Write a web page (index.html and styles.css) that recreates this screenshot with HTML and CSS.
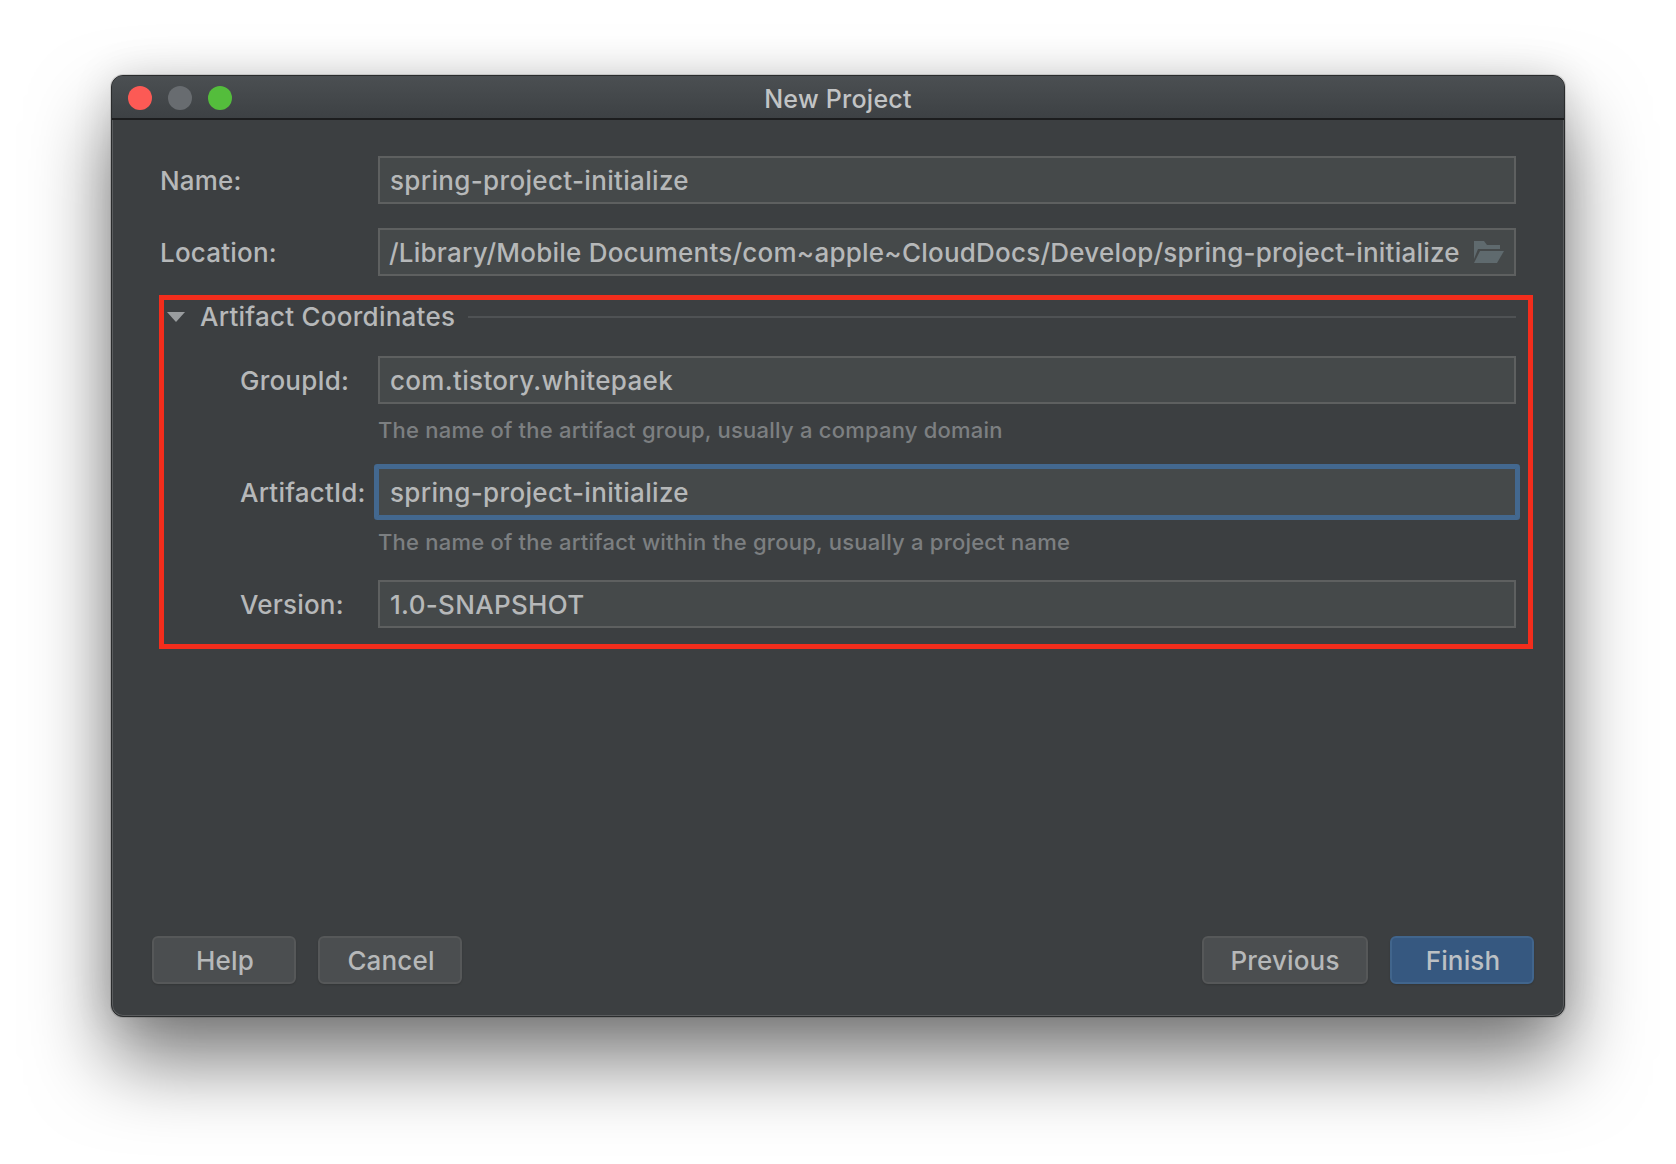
FILE: index.html
```html
<!DOCTYPE html>
<html lang="en">
<head>
<meta charset="utf-8">
<title>New Project</title>
<link rel="stylesheet" href="styles.css">
</head>
<body>
<div class="window">
  <header class="titlebar">
    <div class="lights">
      <span class="light light-red"></span>
      <span class="light light-gray"></span>
      <span class="light light-green"></span>
    </div>
    <div class="title">New Project</div>
  </header>
  <main class="content">
    <div class="row top-row">
      <label class="label">Name:</label>
      <div class="field">spring-project-initialize</div>
    </div>
    <div class="row top-row">
      <label class="label">Location:</label>
      <div class="field field-path">
        <span class="path-text">/Library/Mobile Documents/com~apple~CloudDocs/Develop/spring-project-initialize</span>
        <svg class="folder" width="30" height="22" viewBox="0 0 30 22"><path d="M0 0h10l3 4h13v4H4L0 18z" fill="#5f6a6e"/><path d="M6 10h24l-7 12H0z" fill="#5f6a6e"/></svg>
      </div>
    </div>
    <section class="coords">
      <div class="coords-head">
        <svg class="caret" width="18" height="10" viewBox="0 0 18 10"><path d="M0 0h18L9 10z" fill="#9a9d9f"/></svg>
        <span class="coords-title">Artifact Coordinates</span>
        <span class="coords-line"></span>
      </div>
      <div class="row sub-row">
        <label class="label">GroupId:</label>
        <div class="field">com.tistory.whitepaek</div>
      </div>
      <div class="hint">The name of the artifact group, usually a company domain</div>
      <div class="row sub-row">
        <label class="label">ArtifactId:</label>
        <div class="field field-focus">spring-project-initialize</div>
      </div>
      <div class="hint">The name of the artifact within the group, usually a project name</div>
      <div class="row sub-row">
        <label class="label">Version:</label>
        <div class="field">1.0-SNAPSHOT</div>
      </div>
    </section>
  </main>
  <footer class="footer">
    <div class="btn-group">
      <button class="btn btn-small">Help</button>
      <button class="btn btn-small">Cancel</button>
    </div>
    <div class="btn-group">
      <button class="btn btn-prev">Previous</button>
      <button class="btn btn-small btn-primary">Finish</button>
    </div>
  </footer>
</div>
</body>
</html>
```
FILE: styles.css
```css
* { box-sizing: border-box; }
html, body { margin: 0; height: 100%; }
body {
  background: #fff;
  padding: 75px 111px 147px;
  font-family: Inter, "Noto Sans", sans-serif;
  font-size: 26px;
  font-weight: 450;
  letter-spacing: .33px;
  color: #b6b8b9;
  overflow: hidden;
}
.window {
  height: 942px;
  display: flex;
  flex-direction: column;
  background: #3c3f41;
  border: 1px solid #2a2c2d;
  border-radius: 12px;
  box-shadow: 0 0 0 1px rgba(0,0,0,.12), 0 44px 80px rgba(0,0,0,.52), 0 0 40px rgba(0,0,0,.12), inset 0 0 0 1px #5a5c5e;
}
.titlebar {
  position: relative;
  height: 44px;
  flex: none;
  display: flex;
  align-items: center;
  justify-content: center;
  padding-top: 3px;
  background: linear-gradient(#4b4f52, #3d4144);
  border-bottom: 2px solid #1c1d1e;
  border-radius: 11px 11px 0 0;
}
.lights {
  position: absolute;
  left: 16px;
  top: 10px;
  display: flex;
  gap: 16px;
}
.light { width: 24px; height: 24px; border-radius: 50%; }
.light-red { background: #fc5a55; }
.light-gray { background: #686c70; }
.light-green { background: #54bd3c; }
.title { color: #c2c4c5; font-size: 25px; line-height: 30px; letter-spacing: .25px; }
.content {
  flex: 1;
  padding: 36px 31px 0 47px;
}
.row { display: flex; align-items: center; }
.top-row { padding: 0 17px 0 1px; margin-bottom: 24px; }
.top-row .label { width: 218px; }
.sub-row { padding-left: 76px; }
.sub-row .label { width: 138px; }
.label { flex: none; line-height: 50px; height: 48px; letter-spacing: .2px; }
.field {
  flex: 1;
  min-width: 0;
  height: 48px;
  line-height: 46px;
  padding: 0 10px;
  background: #45494a;
  border: 2px solid #5e6060;
  white-space: nowrap;
}
.field-path { display: flex; justify-content: space-between; align-items: center; padding: 0 10px 0 9px; }
.path-text { min-width: 0; margin-top: 2px; letter-spacing: .23px; }
.folder { flex: none; }
.field-focus {
  border: 1px solid #43688f;
  padding: 0 11px;
  line-height: 48px;
  box-shadow: 0 0 0 4px #43688f;
  border-radius: 1px;
}
.coords {
  margin-top: -5px;
  border: 5px solid #f32d1c;
  padding: 0 12px 16px 0;
}
.coords-head {
  height: 56px;
  display: flex;
  align-items: center;
  padding: 0 0 23px 3px;
}
.caret { flex: none; margin-right: 15px; }
.coords-title { flex: none; line-height: 34px; letter-spacing: .25px; }
.coords-line { flex: 1; height: 2px; background: #4f5254; margin-left: 13px; }
.hint {
  margin: 11px 0 22px 214px;
  font-size: 22px;
  line-height: 31px;
  letter-spacing: .22px;
  color: #7c7f81;
  white-space: nowrap;
}
.footer {
  flex: none;
  display: flex;
  justify-content: space-between;
  padding: 0 30px 32px 40px;
}
.btn-group { display: flex; gap: 22px; }
.btn {
  height: 48px;
  padding: 0;
  font: inherit;
  letter-spacing: .15px;
  color: #b6b8b9;
  background: #4b4e50;
  border: 2px solid #565859;
  border-radius: 6px;
  box-shadow: 0 1px 2px rgba(0,0,0,.15);
}
.btn-small { width: 144px; padding-left: 2px; }
.btn-prev { width: 166px; }
.btn-primary { background: #365880; border-color: #41658c; color: #bcc0c4; }
```
